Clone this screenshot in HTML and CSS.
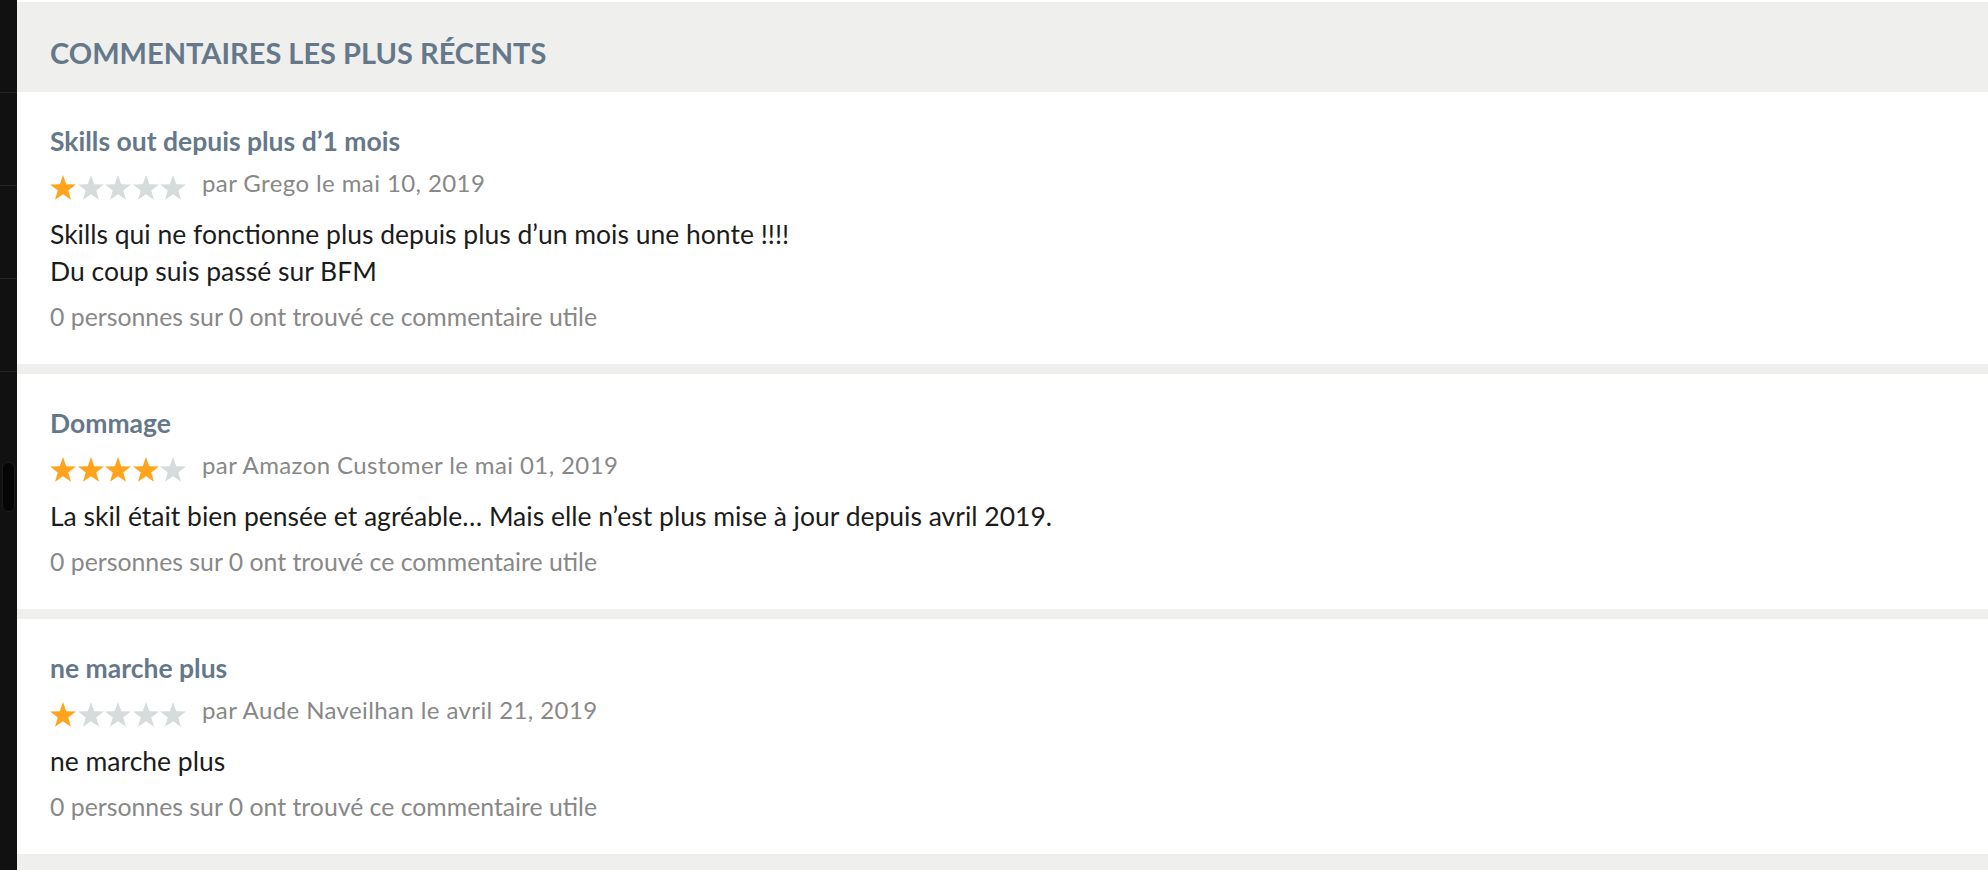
FILE: index.html
```html
<!DOCTYPE html>
<html lang="fr">
<head>
  <meta charset="UTF-8">
  <meta name="viewport" content="width=device-width, initial-scale=1.0">
  <title>Commentaires les plus récents</title>
  <link rel="stylesheet" href="styles.css">
</head>
<body>
  <div class="page">
    <div class="rail">
      <div class="rail-row"></div>
      <div class="rail-row"></div>
      <div class="rail-row"></div>
      <div class="rail-row"></div>
      <div class="rail-thumb"></div>
    </div>

    <div class="panel">
      <h2 class="panel-title">Commentaires les plus récents</h2>

      <div class="reviews">
        <div class="review">
          <h3 class="review-title">Skills out depuis plus d’1 mois</h3>
          <div class="review-meta">
            <div class="stars" data-rating="1"></div>
            <span>par Grego le mai 10, 2019</span>
          </div>
          <p class="review-text">Skills qui ne fonctionne plus depuis plus d’un mois une honte !!!!<br>Du coup suis passé sur BFM</p>
          <div class="review-help">0 personnes sur 0 ont trouvé ce commentaire utile</div>
        </div>

        <div class="review">
          <h3 class="review-title">Dommage</h3>
          <div class="review-meta">
            <div class="stars" data-rating="4"></div>
            <span>par Amazon Customer le mai 01, 2019</span>
          </div>
          <p class="review-text">La skil était bien pensée et agréable… Mais elle n’est plus mise à jour depuis avril 2019.</p>
          <div class="review-help">0 personnes sur 0 ont trouvé ce commentaire utile</div>
        </div>

        <div class="review">
          <h3 class="review-title">ne marche plus</h3>
          <div class="review-meta">
            <div class="stars" data-rating="1"></div>
            <span>par Aude Naveilhan le avril 21, 2019</span>
          </div>
          <p class="review-text">ne marche plus</p>
          <div class="review-help">0 personnes sur 0 ont trouvé ce commentaire utile</div>
        </div>
      </div>
    </div>
  </div>

  <script>
    const starPath = 'M12.5 .1L15.62 8.91 24.96 9.15 17.54 14.84 20.2 23.8 12.5 18.5 4.8 23.8 7.46 14.84 .04 9.15 9.38 8.91z';

    document.querySelectorAll('.stars').forEach(function(el) {
      const rating = Number(el.dataset.rating);
      let html = '';
      for (let i = 1; i <= 5; i++) {
        const cls = i <= rating ? 'star on' : 'star';
        html += `<svg class="${cls}" viewBox="0 0 25 24"><path d="${starPath}"/></svg>`;
      }
      el.innerHTML = html;
    });
  </script>
</body>
</html>
```

FILE: styles.css
```css
body {
  margin: 0;
  background-color: #fff;
  font-family: Lato, 'Open Sans', Arial, sans-serif;
}
.page {
  display: flex;
  min-height: 870px;
}
.rail {
  width: 17px;
  flex-shrink: 0;
  background-color: #111;
}
.rail-row {
  height: 92px;
  border-bottom: 1px solid #232323;
}
.rail-thumb {
  height: 48px;
  margin: 90px 2px 0 2px;
  background-color: #050505;
  border: 1px solid #1d1d1d;
  border-radius: 6px;
}
.panel {
  flex: 1;
  margin-top: 2px;
  background-color: #efefed;
}
.panel-title {
  margin: 0;
  padding: 36px 33px 24px;
  font-size: 29px;
  line-height: 30px;
  font-weight: 700;
  text-transform: uppercase;
  color: #65788a;
}
.reviews {
  display: flex;
  flex-direction: column;
  gap: 10px;
}
.review {
  background-color: #fff;
  padding: 34px 33px 32px;
}
.review-title {
  margin: 0 0 12px;
  font-size: 26.5px;
  line-height: 30px;
  font-weight: 700;
  color: #65788a;
}
.review-meta {
  display: flex;
  align-items: flex-start;
  height: 30px;
  font-size: 24px;
  line-height: 30px;
  letter-spacing: 0.4px;
  color: #888;
}
.stars {
  display: flex;
  gap: 1.5px;
  margin: 7px 16px 0 0;
}
.star {
  width: 26px;
  height: 25px;
  fill: #d6dbdb;
}
.star.on {
  fill: #ffa41c;
}
.review-text {
  margin: 18px 0 0;
  font-size: 26.5px;
  line-height: 37px;
  color: #1c1c1c;
}
.review-help {
  margin-top: 12px;
  font-size: 24.8px;
  line-height: 30px;
  color: #888;
}
```
